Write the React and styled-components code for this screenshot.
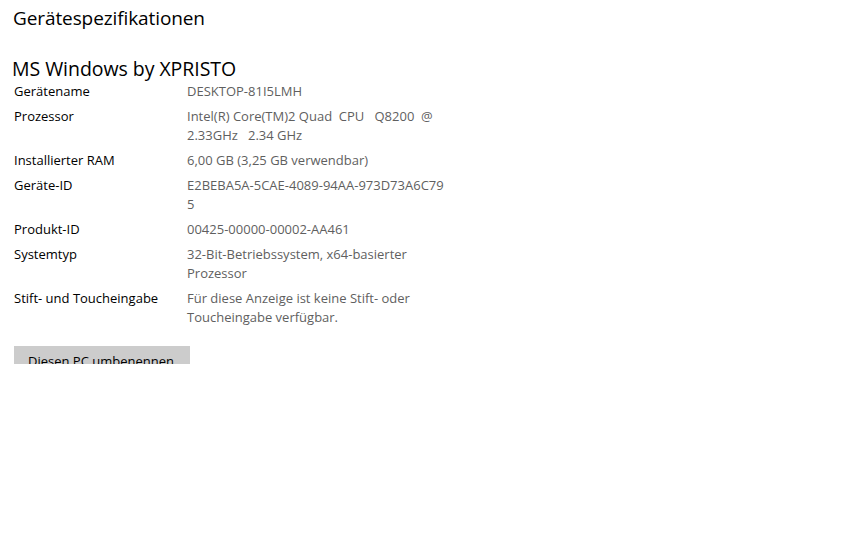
import React from "react";
import styled, { createGlobalStyle } from "styled-components";

const Global = createGlobalStyle`
  html, body { margin: 0; padding: 0; background: #fff; }
  body { font-family: "Open Sans", "Noto Sans", sans-serif; }
`;

const Page = styled.div`
  width: 866px;
  height: 549px;
  background: #fff;
`;

const Panel = styled.div`
  height: 364px;
  overflow: hidden;
  padding-left: 13px;
  box-sizing: border-box;
`;

const Title = styled.h1`
  margin: 0;
  padding-top: 5px;
  font-size: 19px;
  font-weight: 400;
  line-height: 26px;
  color: #000;
  letter-spacing: -0.1px;
`;

const DeviceName = styled.h2`
  margin: 25px 0 0 -1px;
  font-size: 19.5px;
  font-weight: 400;
  line-height: 26px;
  color: #000;
  letter-spacing: -0.05px;
`;

const Specs = styled.div`
  display: grid;
  grid-template-columns: 173px 259px;
  row-gap: 6px;
  margin-left: 1px;
  font-size: 13px;
  line-height: 19px;
`;

const Label = styled.div`
  color: #000;
`;

const Value = styled.div`
  color: #5f5f5f;
  white-space: pre-wrap;
  word-break: ${(p) => (p.$breakAll ? "break-all" : "normal")};
`;

const RenameButton = styled.button`
  display: block;
  margin: 19px 0 0 1px;
  width: 176px;
  height: 32px;
  border: none;
  background: #cccccc;
  font-family: inherit;
  font-size: 13px;
  color: #000;
  text-align: left;
  padding: 0 0 2px 14px;
  line-height: 30px;
`;

const specs = [
  ["Gerätename", "DESKTOP-81I5LMH"],
  ["Prozessor", "Intel(R) Core(TM)2 Quad  CPU   Q8200  @ 2.33GHz   2.34 GHz"],
  ["Installierter RAM", "6,00 GB (3,25 GB verwendbar)"],
  ["Geräte-ID", "E2BEBA5A-5CAE-4089-94AA-973D73A6C795", true],
  ["Produkt-ID", "00425-00000-00002-AA461"],
  ["Systemtyp", "32-Bit-Betriebssystem, x64-basierter Prozessor"],
  ["Stift- und Toucheingabe", "Für diese Anzeige ist keine Stift- oder Toucheingabe verfügbar."],
];

export default function App() {
  return (
    <Page>
      <Global />
      <Panel>
        <Title>Gerätespezifikationen</Title>
        <DeviceName>MS Windows by XPRISTO</DeviceName>
        <Specs>
          {specs.map(([k, v, breakAll]) => (
            <React.Fragment key={k}>
              <Label>{k}</Label>
              <Value $breakAll={breakAll}>{v}</Value>
            </React.Fragment>
          ))}
        </Specs>
        <RenameButton>Diesen PC umbenennen</RenameButton>
      </Panel>
    </Page>
  );
}
